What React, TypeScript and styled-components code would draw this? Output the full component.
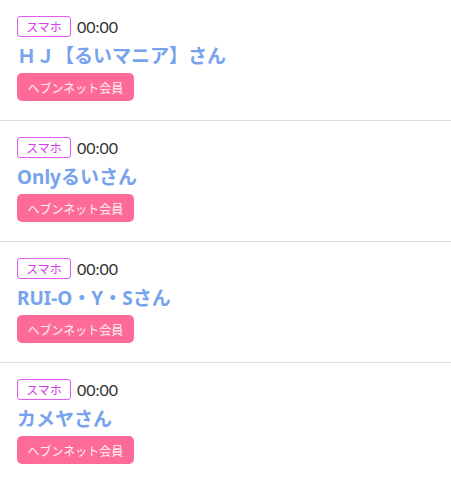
import React from 'react';
import styled, { createGlobalStyle } from 'styled-components';

const GlobalStyle = createGlobalStyle`
  body {
    margin: 0;
    background: #fff;
    font-family: "Noto Sans", "Noto Sans CJK JP", sans-serif;
  }
`;

const List = styled.ul`
  list-style: none;
  margin: 0;
  padding: 0;
`;

const Item = styled.li`
  padding: 16px 17px 19px;
  border-bottom: 1px solid #dcdcdc;
  &:last-child { border-bottom: none; }
`;

const Meta = styled.div`
  display: flex;
  align-items: center;
  gap: 6px;
  height: 21px;
`;

const Device = styled.span`
  box-sizing: border-box;
  height: 21px;
  width: 54px;
  display: inline-flex;
  align-items: center;
  justify-content: center;
  border: 1px solid #e45af4;
  border-radius: 3px;
  color: #d43ee8;
  font-size: 12px;
  font-family: "Noto Sans CJK JP", sans-serif;
`;

const Time = styled.span`
  font-size: 16px;
  color: #333;
  font-family: Lato, "Noto Sans", sans-serif;
`;

const Name = styled.div`
  margin: 6px 0 3px;
  height: 27px;
  line-height: 27px;
  font-size: 19px;
  font-weight: 700;
  color: #77a2ee;
  font-family: "Noto Sans", "Noto Sans CJK JP", sans-serif;
  white-space: nowrap;
`;

const Member = styled.span`
  box-sizing: border-box;
  display: inline-flex;
  align-items: center;
  justify-content: center;
  width: 117px;
  height: 28px;
  border-radius: 5px;
  background: #ff6b99;
  color: #fdf0f4;
  font-size: 12px;
  font-family: "Noto Sans CJK JP", sans-serif;
`;

const girls = ['ＨＪ【るいマニア】さん', 'Onlyるいさん', 'RUI-O・Y・Sさん', 'カメヤさん'];

function App() {
  return (
    <>
      <GlobalStyle />
      <List>
        {girls.map(name => (
          <Item key={name}>
            <Meta>
              <Device>スマホ</Device>
              <Time>00:00</Time>
            </Meta>
            <Name>{name}</Name>
            <Member>ヘブンネット会員</Member>
          </Item>
        ))}
      </List>
    </>
  );
}

export default App;
